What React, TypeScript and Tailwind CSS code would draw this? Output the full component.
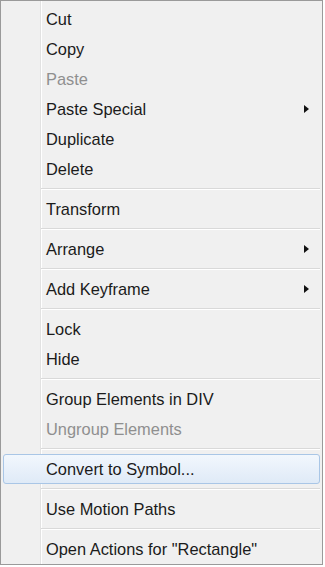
import React from 'react'

type Entry = { label?: string; disabled?: boolean; sub?: boolean; active?: boolean; sep?: boolean }

const items: Entry[] = [
    { label: 'Cut' },
    { label: 'Copy' },
    { label: 'Paste', disabled: true },
    { label: 'Paste Special', sub: true },
    { label: 'Duplicate' },
    { label: 'Delete' },
    { sep: true },
    { label: 'Transform' },
    { sep: true },
    { label: 'Arrange', sub: true },
    { sep: true },
    { label: 'Add Keyframe', sub: true },
    { sep: true },
    { label: 'Lock' },
    { label: 'Hide' },
    { sep: true },
    { label: 'Group Elements in DIV' },
    { label: 'Ungroup Elements', disabled: true },
    { sep: true },
    { label: 'Convert to Symbol...', active: true },
    { sep: true },
    { label: 'Use Motion Paths' },
    { sep: true },
    { label: 'Open Actions for "Rectangle"' },
]

const Arrow = () => (
    <svg width="5" height="8" viewBox="0 0 5 8" className="mr-[10px]">
        <path d="M0 0 L5 4 L0 8 Z" fill="#111" />
    </svg>
)

const MenuRow = ({ item }: { item: Entry }) => {
    if (item.sep) {
        return (
            <div className="h-[10px] flex flex-col justify-center pl-[40px] pr-[2px]">
                <div className="h-px bg-[#d9d9d9]" />
                <div className="h-px bg-white" />
            </div>
        )
    }
    return (
        <div className="h-[30px] px-[2px] flex">
            <div
                className={
                    item.active
                        ? 'flex-1 flex items-center rounded-[3px] border border-[#a9c6e6] bg-gradient-to-b from-[#f2f7fd] to-[#dfeaf7]'
                        : 'flex-1 flex items-center border border-transparent'
                }
            >
                <span
                    className={`pl-[42px] pt-[1px] flex-1 text-[16.4px] leading-none ${item.disabled ? 'text-[#8f8f8f]' : 'text-[#1b1b1b]'}`}
                >
                    {item.label}
                </span>
                {item.sub && <Arrow />}
            </div>
        </div>
    )
}

export default function App() {
    return (
        <div className="w-[325px] h-[567px] bg-white" style={{ fontFamily: '"Liberation Sans", Arial, sans-serif' }}>
            <div className="relative w-[323px] h-[565px] border border-[#9a9a9a] bg-[#f0f0f0] pt-[3px]">
                <div className="absolute left-[39px] top-0 bottom-0 w-[2px] flex">
                    <div className="w-px bg-[#e2e2e2]" />
                    <div className="w-px bg-white" />
                </div>
                <div className="relative flex flex-col">
                    {items.map((item, i) => (
                        <MenuRow key={i} item={item} />
                    ))}
                </div>
            </div>
        </div>
    )
}
